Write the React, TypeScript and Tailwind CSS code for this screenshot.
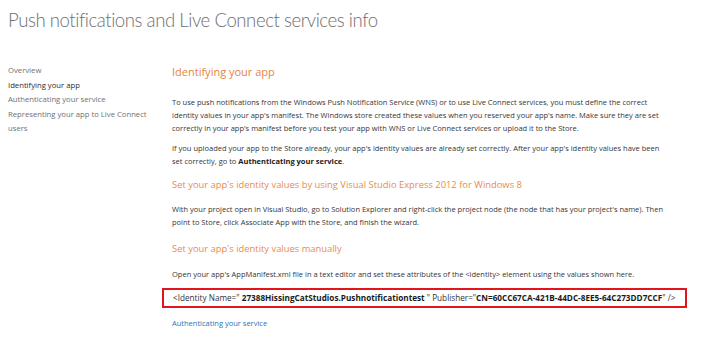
import React from 'react';

const body = "font-['Open_Sans','Noto_Sans',sans-serif]";

const navItems = [
  { label: 'Overview', active: false },
  { label: 'Identifying your app', active: true },
  { label: 'Authenticating your service', active: false },
  { label: 'Representing your app to Live Connect users', active: false },
];

const App: React.FC = () => {
  return (
    <div className={`w-[720px] h-[341px] overflow-hidden bg-white ${body}`}>
      <h1 className="pl-[8px] pt-[8px] text-[18.6px] leading-[24px] font-light tracking-[-0.45px] text-[#6e6e6e] font-['Lato',sans-serif] whitespace-nowrap">
        Push notifications and Live Connect services info
      </h1>

      <div className="flex mt-[31px]">
        {/* left nav */}
        <nav className="w-[172px] shrink-0 pl-[8px] pr-[18px] text-[7.7px] leading-[14.5px]">
          {navItems.map((item) => (
            <div key={item.label} className={item.active ? 'text-[#2b2b2b]' : 'text-[#707070]'}>
              {item.label}
            </div>
          ))}
        </nav>

        {/* main content */}
        <main className="flex-1 text-[7.5px] leading-[13px] text-[#363636]">
          <h2 className="text-[11px] leading-[18px] mt-[-0.5px] text-[#e5843f]">Identifying your app</h2>

          <p className="mt-[15.5px] whitespace-nowrap">
            To use push notifications from the Windows Push Notification Service (WNS) or to use Live Connect services, you must define the correct
            <br />
            identity values in your app's manifest. The Windows store created these values when you reserved your app's name. Make sure they are set
            <br />
            correctly in your app's manifest before you test your app with WNS or Live Connect services or upload it to the Store.
          </p>

          <p className="mt-[7px] whitespace-nowrap">
            If you uploaded your app to the Store already, your app's identity values are already set correctly. After your app's identity values have been
            <br />
            set correctly, go to <span className="font-bold text-[#222]">Authenticating your service</span>.
          </p>

          <h3 className="mt-[9.5px] text-[9.4px] leading-[14px] text-[#e98b4c] whitespace-nowrap">
            Set your app's identity values by using Visual Studio Express 2012 for Windows 8
          </h3>

          <p className="mt-[11.5px] whitespace-nowrap">
            With your project open in Visual Studio, go to Solution Explorer and right-click the project node (the node that has your project's name). Then
            <br />
            point to Store, click Associate App with the Store, and finish the wizard.
          </p>

          <h3 className="mt-[12.5px] text-[9.4px] leading-[14px] text-[#e98b4c] whitespace-nowrap">
            Set your app's identity values manually
          </h3>

          <p className="mt-[12px] whitespace-nowrap">
            Open your app's AppManifest.xml file in a text editor and set these attributes of the &lt;identity&gt; element using the values shown here.
          </p>

          <div className="ml-[-10px] mt-[7px] w-[525px] h-[20px] border-2 border-[#e3141b] pl-[9px] flex items-center whitespace-nowrap text-[#333] text-[8.2px]">
            <span>
              &lt;Identity Name=" <span className="font-bold text-[#1a1a1a]">27388HissingCatStudios.Pushnotificationtest</span> " Publisher="
              <span className="font-bold text-[#1a1a1a]">CN=60CC67CA-421B-44DC-8EE5-64C273DD7CCF</span>" /&gt;
            </span>
          </div>

          <a href="#" className="block mt-[9.5px] text-[#2e72b5] whitespace-nowrap">
            Authenticating your service
          </a>
        </main>
      </div>
    </div>
  );
};

export default App;
